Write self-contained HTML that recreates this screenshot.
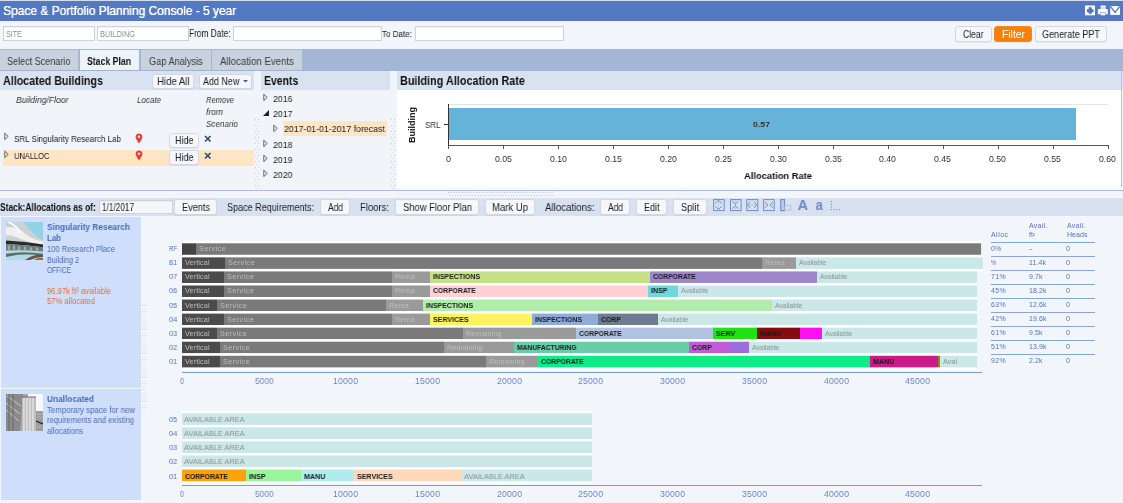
<!DOCTYPE html>
<html><head><meta charset="utf-8"><title>Space &amp; Portfolio Planning Console</title>
<style>
html,body{margin:0;padding:0}
body{width:1123px;height:503px;overflow:hidden;position:relative;background:#eef3f8;font-family:"Liberation Sans",sans-serif}
.t{position:absolute;white-space:nowrap;line-height:normal;font-family:"Liberation Sans",sans-serif;will-change:transform}
.btn{position:absolute;border:1px solid #d3d9e3;border-radius:3px;box-shadow:0 1px 1px rgba(0,0,0,0.06)}
.inp{position:absolute;border:1px solid #cdd2dc;box-shadow:inset 0 1px 1px rgba(0,0,0,0.05)}
</style></head><body>
<div style="position:absolute;left:0px;top:0px;width:1123px;height:1px;background:#d4deec;"></div>
<div style="position:absolute;left:0px;top:1px;width:1123px;height:20px;background:#5479c1;"></div>
<div class="t" style="left:3.00px;top:3.49px;font-size:12.94px;font-weight:normal;font-style:normal;color:#fff;transform:scaleX(0.9231);transform-origin:0 0;text-shadow:0.45px 0 0 #fff;">Space &amp; Portfolio Planning Console - 5 year</div>
<svg style="position:absolute;left:1084px;top:4px" width="39" height="13" viewBox="0 0 39 13">
<rect x="1" y="1.5" width="10" height="9.8" fill="#fff"/>
<rect x="3" y="5.2" width="6.6" height="3" fill="#4f74bf"/>
<rect x="4.6" y="3.2" width="3.2" height="6.6" fill="#4f74bf"/>
<rect x="16.6" y="1.5" width="5" height="4.5" fill="#fff"/>
<path d="M17.2 3.2h3.8M17.2 4.8h3.8" stroke="#a9bde2" stroke-width="0.7"/>
<rect x="13.9" y="5.2" width="9.9" height="5" fill="#fff"/>
<rect x="15.6" y="8.4" width="6.6" height="1" fill="#7d9ad2"/>
<rect x="16.8" y="9.4" width="4.4" height="1.9" fill="#fff"/>
<rect x="26.2" y="2.1" width="9.8" height="8.8" fill="#fff"/>
<path d="M26.4 2.3L31.1 8.5 35.8 2.3" fill="none" stroke="#5479c1" stroke-width="1.3"/>
</svg>
<div style="position:absolute;left:0px;top:21px;width:1123px;height:28px;background:#f2f6fa;"></div>
<div class="inp" style="left:3px;top:26px;width:90px;height:13px;background:#fff"></div>
<div class="t" style="left:5.50px;top:28.68px;font-size:9.30px;font-weight:normal;font-style:normal;color:#8c8c8c;transform:scaleX(0.7641);transform-origin:0 0;">SITE</div>
<div class="inp" style="left:97px;top:26px;width:90px;height:13px;background:#fff"></div>
<div class="t" style="left:99.50px;top:28.68px;font-size:9.30px;font-weight:normal;font-style:normal;color:#8c8c8c;transform:scaleX(0.7966);transform-origin:0 0;">BUILDING</div>
<div class="t" style="left:188.50px;top:28.39px;font-size:10.17px;font-weight:normal;font-style:normal;color:#222;transform:scaleX(0.8195);transform-origin:0 0;">From Date:</div>
<div class="inp" style="left:233px;top:26px;width:147px;height:13px;background:#fff"></div>
<div class="t" style="left:382.40px;top:28.06px;font-size:9.88px;font-weight:normal;font-style:normal;color:#222;transform:scaleX(0.8123);transform-origin:0 0;">To Date:</div>
<div class="inp" style="left:415px;top:26px;width:147px;height:13px;background:#fff"></div>
<div class="btn" style="left:955px;top:26px;width:35px;height:14px;background:#f5f7fb;border-color:#d3d9e3;"></div>
<div class="t" style="left:963.25px;top:29.19px;font-size:10.17px;font-weight:normal;font-style:normal;color:#222;transform:scaleX(0.8431);transform-origin:0 0;">Clear</div>
<div class="btn" style="left:994px;top:26px;width:36px;height:14px;background:#f5800a;border-color:#f08a24;"></div>
<div class="t" style="left:1001.50px;top:29.19px;font-size:10.17px;font-weight:normal;font-style:normal;color:#fff;transform:scaleX(1.0172);transform-origin:0 0;">Filter</div>
<div class="btn" style="left:1035px;top:26px;width:70px;height:14px;background:#f5f7fb;border-color:#d3d9e3;"></div>
<div class="t" style="left:1042.00px;top:29.19px;font-size:10.17px;font-weight:normal;font-style:normal;color:#222;transform:scaleX(0.8918);transform-origin:0 0;">Generate PPT</div>
<div style="position:absolute;left:0px;top:49px;width:1123px;height:22px;background:#a3b6d6;"></div>
<div style="position:absolute;left:0px;top:50px;width:78px;height:20px;background:#c8d1de;"></div>
<div class="t" style="left:6.70px;top:54.60px;font-size:10.61px;font-weight:normal;font-style:normal;color:#3a3a3a;transform:scaleX(0.8531);transform-origin:0 0;">Select Scenario</div>
<div style="position:absolute;left:80px;top:50px;width:59px;height:20px;background:#eef3f9;"></div>
<div class="t" style="left:86.80px;top:54.60px;font-size:10.61px;font-weight:bold;font-style:normal;color:#111;transform:scaleX(0.8198);transform-origin:0 0;">Stack Plan</div>
<div style="position:absolute;left:141px;top:50px;width:70px;height:20px;background:#c8d1de;"></div>
<div class="t" style="left:148.80px;top:54.60px;font-size:10.61px;font-weight:normal;font-style:normal;color:#3a3a3a;transform:scaleX(0.8655);transform-origin:0 0;">Gap Analysis</div>
<div style="position:absolute;left:212px;top:50px;width:90px;height:20px;background:#c8d1de;"></div>
<div class="t" style="left:220.20px;top:54.60px;font-size:10.61px;font-weight:normal;font-style:normal;color:#3a3a3a;transform:scaleX(0.9079);transform-origin:0 0;">Allocation Events</div>
<div style="position:absolute;left:0px;top:70px;width:1123px;height:1px;background:#9fb3d3;"></div>
<div style="position:absolute;left:0px;top:71px;width:1123px;height:120px;background:#f1f5f9;"></div>
<div style="position:absolute;left:0px;top:71px;width:254px;height:19px;background:#d8e2f0;"></div>
<div class="t" style="left:3.00px;top:73.56px;font-size:12.65px;font-weight:bold;font-style:normal;color:#111;transform:scaleX(0.8472);transform-origin:0 0;">Allocated Buildings</div>
<div class="btn" style="left:152px;top:74px;width:40px;height:13px;background:#f5f7fb;border-color:#d3d9e3;"></div>
<div class="t" style="left:156.70px;top:75.53px;font-size:10.47px;font-weight:normal;font-style:normal;color:#222;transform:scaleX(0.9187);transform-origin:0 0;">Hide All</div>
<div class="btn" style="left:199px;top:74px;width:51px;height:13px;background:#f5f7fb;border-color:#d3d9e3;"></div>
<div class="t" style="left:203.40px;top:75.53px;font-size:10.47px;font-weight:normal;font-style:normal;color:#222;transform:scaleX(0.8548);transform-origin:0 0;">Add New</div>
<svg style="position:absolute;left:243px;top:80px" width="6" height="4"><path d="M0 0h5l-2.5 2.5z" fill="#3a5ea8"/></svg>
<div class="t" style="left:15.80px;top:95.34px;font-size:9.01px;font-weight:normal;font-style:italic;color:#333;transform:scaleX(0.9528);transform-origin:0 0;">Building/Floor</div>
<div class="t" style="left:137.00px;top:95.34px;font-size:9.01px;font-weight:normal;font-style:italic;color:#333;transform:scaleX(0.8870);transform-origin:0 0;">Locate</div>
<div class="t" style="left:205.50px;top:95.34px;font-size:9.01px;font-weight:normal;font-style:italic;color:#333;transform:scaleX(0.8344);transform-origin:0 0;">Remove</div>
<div class="t" style="left:205.50px;top:107.34px;font-size:9.01px;font-weight:normal;font-style:italic;color:#333;transform:scaleX(0.9432);transform-origin:0 0;">from</div>
<div class="t" style="left:205.50px;top:119.34px;font-size:9.01px;font-weight:normal;font-style:italic;color:#333;transform:scaleX(0.8997);transform-origin:0 0;">Scenario</div>
<div style="position:absolute;left:3px;top:150px;width:251px;height:16px;background:#fde5c6;"></div>
<svg style="position:absolute;left:4px;top:132px" width="8" height="9"><path d="M0.8 1.2l3.4 3.2-3.4 3.2z" fill="none" stroke="#555" stroke-width="0.9"/></svg>
<div class="t" style="left:14.00px;top:133.06px;font-size:9.88px;font-weight:normal;font-style:normal;color:#222;transform:scaleX(0.8104);transform-origin:0 0;">SRL Singularity Research Lab</div>
<svg style="position:absolute;left:4px;top:150px" width="8" height="9"><path d="M0.8 1.2l3.4 3.2-3.4 3.2z" fill="none" stroke="#555" stroke-width="0.9"/></svg>
<div class="t" style="left:14.00px;top:150.36px;font-size:9.88px;font-weight:normal;font-style:normal;color:#222;transform:scaleX(0.7604);transform-origin:0 0;">UNALLOC</div>
<svg style="position:absolute;left:135px;top:133px" width="8" height="11" viewBox="0 0 8 11"><path d="M4 0.5C2 0.5 0.6 2 0.6 3.8 0.6 6 4 10.5 4 10.5S7.4 6 7.4 3.8C7.4 2 6 .5 4 .5z" fill="#e0423a"/><circle cx="4" cy="3.7" r="1.3" fill="#f6d5d0"/></svg>
<svg style="position:absolute;left:135px;top:150px" width="8" height="11" viewBox="0 0 8 11"><path d="M4 0.5C2 0.5 0.6 2 0.6 3.8 0.6 6 4 10.5 4 10.5S7.4 6 7.4 3.8C7.4 2 6 .5 4 .5z" fill="#e0423a"/><circle cx="4" cy="3.7" r="1.3" fill="#f6d5d0"/></svg>
<div class="btn" style="left:169px;top:133px;width:28px;height:13px;background:#f5f7fb;border-color:#d3d9e3;"></div>
<div class="t" style="left:174.75px;top:135.13px;font-size:10.47px;font-weight:normal;font-style:normal;color:#222;transform:scaleX(0.8595);transform-origin:0 0;">Hide</div>
<div class="btn" style="left:169px;top:150px;width:28px;height:13px;background:#f5f7fb;border-color:#d3d9e3;"></div>
<div class="t" style="left:174.75px;top:151.93px;font-size:10.47px;font-weight:normal;font-style:normal;color:#222;transform:scaleX(0.8595);transform-origin:0 0;">Hide</div>
<svg style="position:absolute;left:204px;top:135px" width="8" height="8"><path d="M1 1l5.5 5.5M6.5 1L1 6.5" stroke="#34506e" stroke-width="1.7"/></svg>
<svg style="position:absolute;left:204px;top:152px" width="8" height="8"><path d="M1 1l5.5 5.5M6.5 1L1 6.5" stroke="#34506e" stroke-width="1.7"/></svg>
<svg style="position:absolute;left:255px;top:119px" width="5" height="71"><defs><pattern id="dp255119" width="5" height="6" patternUnits="userSpaceOnUse"><rect x="0" y="0" width="1" height="1" fill="#c3cad4"/><rect x="3" y="0" width="1" height="1" fill="#c3cad4"/><rect x="1.5" y="3" width="1" height="1" fill="#cfd5dd"/></pattern></defs><rect width="5" height="71" fill="url(#dp255119)"/></svg>
<svg style="position:absolute;left:391px;top:119px" width="5" height="71"><defs><pattern id="dp391119" width="5" height="6" patternUnits="userSpaceOnUse"><rect x="0" y="0" width="1" height="1" fill="#c3cad4"/><rect x="3" y="0" width="1" height="1" fill="#c3cad4"/><rect x="1.5" y="3" width="1" height="1" fill="#cfd5dd"/></pattern></defs><rect width="5" height="71" fill="url(#dp391119)"/></svg>
<div style="position:absolute;left:261px;top:71px;width:129px;height:19px;background:#d8e2f0;"></div>
<div class="t" style="left:263.90px;top:73.56px;font-size:12.65px;font-weight:bold;font-style:normal;color:#111;transform:scaleX(0.8247);transform-origin:0 0;">Events</div>
<svg style="position:absolute;left:263px;top:92.6px" width="8" height="9"><path d="M0.8 1.2l3.4 3.2-3.4 3.2z" fill="none" stroke="#555" stroke-width="0.9"/></svg>
<div class="t" style="left:272.60px;top:92.92px;font-size:9.59px;font-weight:normal;font-style:normal;color:#222;transform:scaleX(0.9137);transform-origin:0 0;">2016</div>
<svg style="position:absolute;left:263px;top:108.7px" width="8" height="8"><path d="M6 1v6h-6z" fill="#222"/></svg>
<div class="t" style="left:272.60px;top:108.02px;font-size:9.59px;font-weight:normal;font-style:normal;color:#222;transform:scaleX(0.9137);transform-origin:0 0;">2017</div>
<svg style="position:absolute;left:263px;top:138.5px" width="8" height="9"><path d="M0.8 1.2l3.4 3.2-3.4 3.2z" fill="none" stroke="#555" stroke-width="0.9"/></svg>
<div class="t" style="left:272.60px;top:138.82px;font-size:9.59px;font-weight:normal;font-style:normal;color:#222;transform:scaleX(0.9137);transform-origin:0 0;">2018</div>
<svg style="position:absolute;left:263px;top:153.6px" width="8" height="9"><path d="M0.8 1.2l3.4 3.2-3.4 3.2z" fill="none" stroke="#555" stroke-width="0.9"/></svg>
<div class="t" style="left:272.60px;top:153.92px;font-size:9.59px;font-weight:normal;font-style:normal;color:#222;transform:scaleX(0.9137);transform-origin:0 0;">2019</div>
<svg style="position:absolute;left:263px;top:169px" width="8" height="9"><path d="M0.8 1.2l3.4 3.2-3.4 3.2z" fill="none" stroke="#555" stroke-width="0.9"/></svg>
<div class="t" style="left:272.60px;top:169.32px;font-size:9.59px;font-weight:normal;font-style:normal;color:#222;transform:scaleX(0.9137);transform-origin:0 0;">2020</div>
<div style="position:absolute;left:283px;top:121px;width:104px;height:15px;background:#fde5c6;"></div>
<svg style="position:absolute;left:273px;top:124px" width="8" height="9"><path d="M0.8 1.2l3.4 3.2-3.4 3.2z" fill="none" stroke="#555" stroke-width="0.9"/></svg>
<div class="t" style="left:283.80px;top:123.32px;font-size:9.59px;font-weight:normal;font-style:normal;color:#222;transform:scaleX(0.9149);transform-origin:0 0;">2017-01-01-2017 forecast</div>
<div style="position:absolute;left:397px;top:71px;width:726px;height:19px;background:#d8e2f0;"></div>
<div class="t" style="left:400.00px;top:73.56px;font-size:12.65px;font-weight:bold;font-style:normal;color:#111;transform:scaleX(0.8582);transform-origin:0 0;">Building Allocation Rate</div>
<div style="position:absolute;left:397px;top:90px;width:725px;height:97px;background:#ffffff;"></div>
<div style="position:absolute;left:1121px;top:71px;width:1px;height:118px;background:#b4c7e4;"></div>
<div style="position:absolute;left:397px;top:187px;width:726px;height:2px;background:#f6f8fb;"></div>
<div style="position:absolute;left:448px;top:104px;width:660px;height:1px;background:#e4e4e4;"></div>
<div style="position:absolute;left:448px;top:104px;width:1px;height:41px;background:#333;"></div>
<div style="position:absolute;left:449px;top:108px;width:627px;height:32px;background:#66b3da;"></div>
<div style="position:absolute;left:448px;top:145px;width:660px;height:1px;background:#555;"></div>
<div style="position:absolute;left:448px;top:145px;width:1px;height:4px;background:#555;"></div>
<div class="t" style="left:446.00px;top:154.11px;font-size:8.72px;font-weight:normal;font-style:normal;color:#333;transform:scaleX(1.0309);transform-origin:0 0;">0</div>
<div style="position:absolute;left:503px;top:145px;width:1px;height:4px;background:#555;"></div>
<div class="t" style="left:494.93px;top:154.11px;font-size:8.72px;font-weight:normal;font-style:normal;color:#333;">0.05</div>
<div style="position:absolute;left:558px;top:145px;width:1px;height:4px;background:#555;"></div>
<div class="t" style="left:549.86px;top:154.11px;font-size:8.72px;font-weight:normal;font-style:normal;color:#333;">0.10</div>
<div style="position:absolute;left:613px;top:145px;width:1px;height:4px;background:#555;"></div>
<div class="t" style="left:604.79px;top:154.11px;font-size:8.72px;font-weight:normal;font-style:normal;color:#333;">0.15</div>
<div style="position:absolute;left:668px;top:145px;width:1px;height:4px;background:#555;"></div>
<div class="t" style="left:659.72px;top:154.11px;font-size:8.72px;font-weight:normal;font-style:normal;color:#333;">0.20</div>
<div style="position:absolute;left:723px;top:145px;width:1px;height:4px;background:#555;"></div>
<div class="t" style="left:714.65px;top:154.11px;font-size:8.72px;font-weight:normal;font-style:normal;color:#333;">0.25</div>
<div style="position:absolute;left:778px;top:145px;width:1px;height:4px;background:#555;"></div>
<div class="t" style="left:769.58px;top:154.11px;font-size:8.72px;font-weight:normal;font-style:normal;color:#333;">0.30</div>
<div style="position:absolute;left:833px;top:145px;width:1px;height:4px;background:#555;"></div>
<div class="t" style="left:824.51px;top:154.11px;font-size:8.72px;font-weight:normal;font-style:normal;color:#333;">0.35</div>
<div style="position:absolute;left:888px;top:145px;width:1px;height:4px;background:#555;"></div>
<div class="t" style="left:879.44px;top:154.11px;font-size:8.72px;font-weight:normal;font-style:normal;color:#333;">0.40</div>
<div style="position:absolute;left:943px;top:145px;width:1px;height:4px;background:#555;"></div>
<div class="t" style="left:934.37px;top:154.11px;font-size:8.72px;font-weight:normal;font-style:normal;color:#333;">0.45</div>
<div style="position:absolute;left:998px;top:145px;width:1px;height:4px;background:#555;"></div>
<div class="t" style="left:989.30px;top:154.11px;font-size:8.72px;font-weight:normal;font-style:normal;color:#333;">0.50</div>
<div style="position:absolute;left:1053px;top:145px;width:1px;height:4px;background:#555;"></div>
<div class="t" style="left:1044.23px;top:154.11px;font-size:8.72px;font-weight:normal;font-style:normal;color:#333;">0.55</div>
<div style="position:absolute;left:1108px;top:145px;width:1px;height:4px;background:#555;"></div>
<div class="t" style="left:1099.16px;top:154.11px;font-size:8.72px;font-weight:normal;font-style:normal;color:#333;">0.60</div>
<div style="position:absolute;left:444px;top:124px;width:4px;height:1px;background:#333;"></div>
<div class="t" style="left:424.50px;top:119.61px;font-size:8.72px;font-weight:normal;font-style:normal;color:#333;transform:scaleX(0.9136);transform-origin:0 0;">SRL</div>
<div class="t" style="left:407px;top:143px;font-size:9px;font-weight:bold;color:#111;transform:rotate(-90deg);transform-origin:0 0">Building</div>
<div class="t" style="left:752.50px;top:119.97px;font-size:7.99px;font-weight:bold;font-style:normal;color:#333;transform:scaleX(1.0926);transform-origin:0 0;">0.57</div>
<div class="t" style="left:744.00px;top:170.39px;font-size:9.74px;font-weight:bold;font-style:normal;color:#111;transform:scaleX(0.9593);transform-origin:0 0;">Allocation Rate</div>
<div style="position:absolute;left:0px;top:191px;width:1123px;height:7px;background:#f2f6fa;"></div>
<div style="position:absolute;left:0px;top:190px;width:1123px;height:1px;background:#a8bfe0;"></div>
<div style="position:absolute;left:0px;top:198px;width:1123px;height:18px;background:#d8e1ef;"></div>
<div class="t" style="left:0.00px;top:201.59px;font-size:10.17px;font-weight:bold;font-style:normal;color:#111;transform:scaleX(0.8323);transform-origin:0 0;">Stack:Allocations as of:</div>
<div class="inp" style="left:99px;top:200px;width:72px;height:12px;background:#f4f6f9"></div>
<div class="t" style="left:102.00px;top:201.53px;font-size:10.47px;font-weight:normal;font-style:normal;color:#222;transform:scaleX(0.7855);transform-origin:0 0;">1/1/2017</div>
<div class="btn" style="left:174px;top:199px;width:41px;height:14px;background:#f5f7fb;border-color:#d3d9e3;"></div>
<div class="t" style="left:181.50px;top:201.53px;font-size:10.47px;font-weight:normal;font-style:normal;color:#222;transform:scaleX(0.8752);transform-origin:0 0;">Events</div>
<div class="t" style="left:227.00px;top:201.53px;font-size:10.47px;font-weight:normal;font-style:normal;color:#222;transform:scaleX(0.8645);transform-origin:0 0;">Space Requirements:</div>
<div class="btn" style="left:320px;top:199px;width:28px;height:14px;background:#f5f7fb;border-color:#d3d9e3;"></div>
<div class="t" style="left:327.50px;top:201.53px;font-size:10.47px;font-weight:normal;font-style:normal;color:#222;transform:scaleX(0.8055);transform-origin:0 0;">Add</div>
<div class="t" style="left:359.50px;top:201.53px;font-size:10.47px;font-weight:normal;font-style:normal;color:#222;transform:scaleX(0.9067);transform-origin:0 0;">Floors:</div>
<div class="btn" style="left:395px;top:199px;width:82px;height:14px;background:#f5f7fb;border-color:#d3d9e3;"></div>
<div class="t" style="left:402.50px;top:201.53px;font-size:10.47px;font-weight:normal;font-style:normal;color:#222;transform:scaleX(0.8986);transform-origin:0 0;">Show Floor Plan</div>
<div class="btn" style="left:485px;top:199px;width:48px;height:14px;background:#f5f7fb;border-color:#d3d9e3;"></div>
<div class="t" style="left:492.00px;top:201.53px;font-size:10.47px;font-weight:normal;font-style:normal;color:#222;transform:scaleX(0.9104);transform-origin:0 0;">Mark Up</div>
<div class="t" style="left:544.70px;top:201.53px;font-size:10.47px;font-weight:normal;font-style:normal;color:#222;transform:scaleX(0.9249);transform-origin:0 0;">Allocations:</div>
<div class="btn" style="left:600px;top:199px;width:28px;height:14px;background:#f5f7fb;border-color:#d3d9e3;"></div>
<div class="t" style="left:607.50px;top:201.53px;font-size:10.47px;font-weight:normal;font-style:normal;color:#222;transform:scaleX(0.8055);transform-origin:0 0;">Add</div>
<div class="btn" style="left:636px;top:199px;width:29px;height:14px;background:#f5f7fb;border-color:#d3d9e3;"></div>
<div class="t" style="left:643.75px;top:201.53px;font-size:10.47px;font-weight:normal;font-style:normal;color:#222;transform:scaleX(0.8595);transform-origin:0 0;">Edit</div>
<div class="btn" style="left:673px;top:199px;width:32px;height:14px;background:#f5f7fb;border-color:#d3d9e3;"></div>
<div class="t" style="left:681.00px;top:201.53px;font-size:10.47px;font-weight:normal;font-style:normal;color:#222;transform:scaleX(0.8841);transform-origin:0 0;">Split</div>
<svg style="position:absolute;left:712px;top:199px" width="130" height="13" viewBox="0 0 130 13">
<g fill="none" stroke="#6e8fc9" stroke-width="1">
<path d="M6.5 1.5v9" stroke="#c4ccd8"/>
<path d="M23.4 1.5v9" stroke="#c4ccd8"/>
<path d="M36.5 6h7" stroke="#c4ccd8" stroke-width="1.6"/>
<path d="M52 6h2M60 6h2" stroke="#c4ccd8" stroke-width="1.2"/>
<rect x="1.6" y="0.6" width="10.6" height="11"/>
<path d="M3.3 4.4L6.5 1.2l3.3 3.2M3.3 7.3L6.5 10.5l3.3-3.2"/>
<rect x="18.5" y="0.6" width="10.6" height="11"/>
<path d="M20.3 2.1L23.4 5l3.1-2.9M20.3 9.7L23.4 6.8l3.1 2.9"/>
<rect x="34.8" y="0.6" width="11" height="11"/>
<path d="M38.5 2.6L35.4 5.9 38.5 9.2M41.9 2.6L45 5.9 41.9 9.2"/>
<rect x="51.6" y="0.6" width="10.6" height="11"/>
<path d="M53.1 3L56 5.9 53.1 8.8M60.9 3L58.2 5.9 60.9 8.8"/>
<rect x="68.8" y="0.6" width="3.6" height="11" stroke-width="1.3"/>
<path d="M70.6 1.5v9" stroke="#a9bbd9" stroke-width="0.8"/>
<rect x="72.9" y="6.5" width="6" height="4.7" stroke="#b9c5d8"/>
</g>
<text x="85.4" y="10.9" font-family="Liberation Sans" font-weight="bold" font-size="14.5" fill="#6e8fc9">A</text>
<text x="0" y="0" font-family="Liberation Sans" font-weight="bold" font-size="15.5" fill="#6e8fc9" transform="translate(103.4 11) scale(0.84 1)">a</text>
<g fill="#6e8fc9"><rect x="118.8" y="2" width="1.1" height="1.1"/><rect x="118.8" y="4.8" width="1.1" height="1.1"/><rect x="118.8" y="7.5" width="1.1" height="1.1"/><rect x="118.8" y="10" width="1.1" height="1.1"/>
<rect x="121.5" y="10" width="1.1" height="1.1"/><rect x="124.2" y="10" width="1.1" height="1.1"/><rect x="126.9" y="10" width="1.1" height="1.1"/></g>
</svg>
<svg style="position:absolute;left:448px;top:191px" width="106" height="6"><defs><pattern id="hdp" width="5.6" height="6" patternUnits="userSpaceOnUse"><rect x="0" y="1" width="1" height="1" fill="#b3bcc9"/><rect x="2.8" y="1" width="1" height="1" fill="#b3bcc9"/><rect x="1.4" y="4" width="1" height="1" fill="#b8c0cc"/><rect x="4.2" y="4" width="1" height="1" fill="#b8c0cc"/></pattern></defs><rect width="106" height="6" fill="url(#hdp)"/></svg>
<div style="position:absolute;left:0px;top:216px;width:1123px;height:287px;background:#f2f6fa;"></div>
<div style="position:absolute;left:1px;top:217px;width:140px;height:171px;background:#cfdffb;"></div>
<div style="position:absolute;left:1px;top:389px;width:140px;height:111px;background:#cfdffb;"></div>
<svg style="position:absolute;left:142px;top:305px" width="5" height="106"><defs><pattern id="dp142305" width="5" height="6" patternUnits="userSpaceOnUse"><rect x="0" y="0" width="1" height="1" fill="#c3cad4"/><rect x="3" y="0" width="1" height="1" fill="#c3cad4"/><rect x="1.5" y="3" width="1" height="1" fill="#cfd5dd"/></pattern></defs><rect width="5" height="106" fill="url(#dp142305)"/></svg>
<svg style="position:absolute;left:6px;top:222px" width="37" height="38" viewBox="0 0 37 37" preserveAspectRatio="none">
<rect width="37" height="37" fill="#c9d3d6"/>
<path d="M0 0H19Q22 10 37 17V0z" fill="#cfd2d3"/>
<path d="M18 0H37V18Q27 13 18 0z" fill="#92d2e6"/>
<path d="M0 5Q12 4 20 12Q28 18 37 19V22Q26 21 16 17Q6 13 0 13z" fill="#f0f0ee"/>
<path d="M2 0Q10 3 14 10" stroke="#ffffff" stroke-width="1.5" fill="none"/>
<path d="M0 18Q20 19 37 22V24.5Q20 22.5 0 21.5z" fill="#2a2a2a"/>
<path d="M0 21.5Q20 22.5 37 24.5V29Q20 27 0 28z" fill="#6b7f7d"/>
<path d="M3 23v4M8 23v4M13 23.5v4M19 24v3.5M25 24.5v3M31 25v3" stroke="#c9d8d4" stroke-width="1"/>
<path d="M0 28Q20 27 37 29V37H0z" fill="#b3dbe6"/>
<path d="M0 31Q18 28 37 31V33Q18 30 0 34z" fill="#5c6e70"/>
<path d="M19 37Q27 31 37 32V34Q30 34 24 37z" fill="#6a5540"/>
<path d="M28 37Q32 34 37 35V37z" fill="#8a7056"/>
</svg>
<div class="t" style="left:47.00px;top:222.38px;font-size:9.30px;font-weight:bold;font-style:normal;color:#4a6db5;transform:scaleX(0.8969);transform-origin:0 0;">Singularity Research</div>
<div class="t" style="left:47.00px;top:232.58px;font-size:9.30px;font-weight:bold;font-style:normal;color:#4a6db5;transform:scaleX(0.8465);transform-origin:0 0;">Lab</div>
<div class="t" style="left:47.00px;top:243.81px;font-size:8.72px;font-weight:normal;font-style:normal;color:#4a6db5;transform:scaleX(0.8658);transform-origin:0 0;">100 Research Place</div>
<div class="t" style="left:47.00px;top:254.61px;font-size:8.72px;font-weight:normal;font-style:normal;color:#4a6db5;transform:scaleX(0.8354);transform-origin:0 0;">Building 2</div>
<div class="t" style="left:47.00px;top:264.91px;font-size:8.72px;font-weight:normal;font-style:normal;color:#4a6db5;transform:scaleX(0.7506);transform-origin:0 0;">OFFICE</div>
<div class="t" style="left:47.00px;top:285.91px;font-size:8.72px;font-weight:normal;font-style:normal;color:#e4703a;transform:scaleX(0.8743);transform-origin:0 0;">96.97k ft² available</div>
<div class="t" style="left:47.00px;top:296.41px;font-size:8.72px;font-weight:normal;font-style:normal;color:#e4703a;transform:scaleX(0.8761);transform-origin:0 0;">57% allocated</div>
<svg style="position:absolute;left:6px;top:394px" width="37" height="37" viewBox="0 0 37 37">
<rect width="37" height="37" fill="#a8a8a8"/>
<path d="M22 0H37V17H30V7H22z" fill="#f8f8f8"/>
<path d="M0 0H17L14 37H0z" fill="#8a8a8a"/>
<path d="M1 2L15 12M0 9L14 20M0 16L13 27" stroke="#cfcfcf" stroke-width="0.9"/>
<path d="M3 0V37M7 0V37" stroke="#5e5e5e" stroke-width="0.8"/>
<path d="M16 3H30V37H16z" fill="#bdbdbd"/>
<path d="M18 4V37M21 3V37M24 3V37M27 4V37" stroke="#f4f4f4" stroke-width="1"/>
<path d="M16 3H30" stroke="#555" stroke-width="0.8"/>
<path d="M30 17H37V37H30z" fill="#9d9d9d"/>
<path d="M31 20H37M31 23H37M31 33H37" stroke="#bdbdbd" stroke-width="0.6"/>
<path d="M30 27L37 30" stroke="#222" stroke-width="1.3"/>
</svg>
<div class="t" style="left:47.00px;top:393.58px;font-size:9.30px;font-weight:bold;font-style:normal;color:#4a6db5;transform:scaleX(0.8914);transform-origin:0 0;">Unallocated</div>
<div class="t" style="left:47.00px;top:404.61px;font-size:8.72px;font-weight:normal;font-style:normal;color:#4a6db5;transform:scaleX(0.8988);transform-origin:0 0;">Temporary space for new</div>
<div class="t" style="left:47.00px;top:415.11px;font-size:8.72px;font-weight:normal;font-style:normal;color:#4a6db5;transform:scaleX(0.8712);transform-origin:0 0;">requirements and existing</div>
<div class="t" style="left:47.00px;top:425.61px;font-size:8.72px;font-weight:normal;font-style:normal;color:#4a6db5;transform:scaleX(0.8736);transform-origin:0 0;">allocations</div>
<div class="t" style="left:169.00px;top:243.50px;font-size:7.85px;font-weight:normal;font-style:normal;color:#5073b8;transform:scaleX(0.7742);transform-origin:0 0;">RF</div>
<div class="t" style="left:169.00px;top:257.50px;font-size:7.85px;font-weight:normal;font-style:normal;color:#5073b8;transform:scaleX(0.8437);transform-origin:0 0;">B1</div>
<div class="t" style="left:168.80px;top:271.50px;font-size:7.85px;font-weight:normal;font-style:normal;color:#5073b8;transform:scaleX(0.9507);transform-origin:0 0;">07</div>
<div class="t" style="left:168.80px;top:285.50px;font-size:7.85px;font-weight:normal;font-style:normal;color:#5073b8;transform:scaleX(0.9507);transform-origin:0 0;">06</div>
<div class="t" style="left:168.80px;top:300.50px;font-size:7.85px;font-weight:normal;font-style:normal;color:#5073b8;transform:scaleX(0.9507);transform-origin:0 0;">05</div>
<div class="t" style="left:168.80px;top:314.50px;font-size:7.85px;font-weight:normal;font-style:normal;color:#5073b8;transform:scaleX(0.9507);transform-origin:0 0;">04</div>
<div class="t" style="left:168.80px;top:328.50px;font-size:7.85px;font-weight:normal;font-style:normal;color:#5073b8;transform:scaleX(0.9507);transform-origin:0 0;">03</div>
<div class="t" style="left:168.80px;top:342.50px;font-size:7.85px;font-weight:normal;font-style:normal;color:#5073b8;transform:scaleX(0.9507);transform-origin:0 0;">02</div>
<div class="t" style="left:168.80px;top:356.50px;font-size:7.85px;font-weight:normal;font-style:normal;color:#5073b8;transform:scaleX(0.9507);transform-origin:0 0;">01</div>
<svg style="position:absolute;left:0;top:0" width="1123" height="503"><rect x="182" y="240.80" width="801" height="16.6" fill="#fff"/><rect x="182" y="243.30" width="14" height="11.6" fill="#444"/><rect x="196" y="243.30" width="785" height="11.6" fill="#7a7a7a"/><rect x="981" y="243.30" width="2" height="11.6" fill="#e6f3f3"/><rect x="182" y="254.86" width="801" height="16.6" fill="#fff"/><rect x="182" y="257.36" width="43" height="11.6" fill="#4b4b4b"/><rect x="225" y="257.36" width="537" height="11.6" fill="#7a7a7a"/><rect x="762" y="257.36" width="34" height="11.6" fill="#9a9a9a"/><rect x="796" y="257.36" width="187" height="11.6" fill="#cbe8e9"/><rect x="182" y="268.92" width="795" height="16.6" fill="#fff"/><rect x="182" y="271.42" width="42" height="11.6" fill="#4b4b4b"/><rect x="224" y="271.42" width="168" height="11.6" fill="#7a7a7a"/><rect x="392" y="271.42" width="38" height="11.6" fill="#9a9a9a"/><rect x="430" y="271.42" width="220" height="11.6" fill="#c6e08a"/><rect x="650" y="271.42" width="167" height="11.6" fill="#9d86c9"/><rect x="817" y="271.42" width="160" height="11.6" fill="#cbe8e9"/><rect x="182" y="282.98" width="795" height="16.6" fill="#fff"/><rect x="182" y="285.48" width="42" height="11.6" fill="#4b4b4b"/><rect x="224" y="285.48" width="168" height="11.6" fill="#7a7a7a"/><rect x="392" y="285.48" width="38" height="11.6" fill="#9a9a9a"/><rect x="430" y="285.48" width="218" height="11.6" fill="#ffd0d4"/><rect x="648" y="285.48" width="30" height="11.6" fill="#6ed8da"/><rect x="678" y="285.48" width="299" height="11.6" fill="#cbe8e9"/><rect x="182" y="297.04" width="795" height="16.6" fill="#fff"/><rect x="182" y="299.54" width="35" height="11.6" fill="#4b4b4b"/><rect x="217" y="299.54" width="169" height="11.6" fill="#7a7a7a"/><rect x="386" y="299.54" width="37" height="11.6" fill="#9a9a9a"/><rect x="423" y="299.54" width="349" height="11.6" fill="#b2ecaa"/><rect x="772" y="299.54" width="205" height="11.6" fill="#cbe8e9"/><rect x="182" y="311.10" width="795" height="16.6" fill="#fff"/><rect x="182" y="313.60" width="42" height="11.6" fill="#4b4b4b"/><rect x="224" y="313.60" width="168" height="11.6" fill="#7a7a7a"/><rect x="392" y="313.60" width="38" height="11.6" fill="#9a9a9a"/><rect x="430" y="313.60" width="102" height="11.6" fill="#fef35a"/><rect x="532" y="313.60" width="66" height="11.6" fill="#8eacd9"/><rect x="598" y="313.60" width="60" height="11.6" fill="#6c7d91"/><rect x="658" y="313.60" width="319" height="11.6" fill="#cbe8e9"/><rect x="182" y="325.16" width="795" height="16.6" fill="#fff"/><rect x="182" y="327.66" width="35" height="11.6" fill="#4b4b4b"/><rect x="217" y="327.66" width="246" height="11.6" fill="#7a7a7a"/><rect x="463" y="327.66" width="113" height="11.6" fill="#9a9a9a"/><rect x="576" y="327.66" width="137" height="11.6" fill="#b0c4e2"/><rect x="713" y="327.66" width="44" height="11.6" fill="#1fe312"/><rect x="757" y="327.66" width="43" height="11.6" fill="#840e0e"/><rect x="800" y="327.66" width="22" height="11.6" fill="#ff10f0"/><rect x="822" y="327.66" width="155" height="11.6" fill="#cbe8e9"/><rect x="182" y="339.22" width="795" height="16.6" fill="#fff"/><rect x="182" y="341.72" width="38" height="11.6" fill="#4b4b4b"/><rect x="220" y="341.72" width="224" height="11.6" fill="#7a7a7a"/><rect x="444" y="341.72" width="70" height="11.6" fill="#9a9a9a"/><rect x="514" y="341.72" width="175" height="11.6" fill="#6acca8"/><rect x="689" y="341.72" width="41" height="11.6" fill="#c05cd6"/><rect x="730" y="341.72" width="19" height="11.6" fill="#9b6fdb"/><rect x="749" y="341.72" width="228" height="11.6" fill="#cbe8e9"/><rect x="182" y="353.28" width="795" height="16.6" fill="#fff"/><rect x="182" y="355.78" width="38" height="11.6" fill="#4b4b4b"/><rect x="220" y="355.78" width="266" height="11.6" fill="#7a7a7a"/><rect x="486" y="355.78" width="52" height="11.6" fill="#9a9a9a"/><rect x="538" y="355.78" width="332" height="11.6" fill="#10eb8a"/><rect x="870" y="355.78" width="68" height="11.6" fill="#cc1a8a"/><rect x="938" y="355.78" width="2" height="11.6" fill="#8f8a10"/><rect x="940" y="355.78" width="37" height="11.6" fill="#cbe8e9"/></svg>
<div class="t" style="left:198.60px;top:243.92px;font-size:7.27px;font-weight:normal;font-style:normal;color:#bdbdbd;letter-spacing:0.411px;">Service</div>
<div class="t" style="left:184.60px;top:257.92px;font-size:7.27px;font-weight:normal;font-style:normal;color:#bdbdbd;letter-spacing:0.110px;">Vertical</div>
<div class="t" style="left:227.60px;top:257.92px;font-size:7.27px;font-weight:normal;font-style:normal;color:#bdbdbd;letter-spacing:0.411px;">Service</div>
<div class="t" style="left:764.60px;top:257.92px;font-size:7.27px;font-weight:normal;font-style:normal;color:#bdbdbd;letter-spacing:0.105px;">Rema</div>
<div class="t" style="left:798.60px;top:257.92px;font-size:7.27px;font-weight:normal;font-style:normal;color:#8a8f90;transform:scaleX(0.9332);transform-origin:0 0;">Available</div>
<div class="t" style="left:184.60px;top:271.92px;font-size:7.27px;font-weight:normal;font-style:normal;color:#bdbdbd;letter-spacing:0.110px;">Vertical</div>
<div class="t" style="left:226.60px;top:271.92px;font-size:7.27px;font-weight:normal;font-style:normal;color:#bdbdbd;letter-spacing:0.411px;">Service</div>
<div class="t" style="left:394.60px;top:271.92px;font-size:7.27px;font-weight:normal;font-style:normal;color:#bdbdbd;letter-spacing:0.105px;">Rema</div>
<div class="t" style="left:432.60px;top:271.92px;font-size:7.27px;font-weight:bold;font-style:normal;color:#1a1a1a;transform:scaleX(0.9540);transform-origin:0 0;">INSPECTIONS</div>
<div class="t" style="left:652.60px;top:271.92px;font-size:7.27px;font-weight:bold;font-style:normal;color:#1a1a1a;transform:scaleX(0.9326);transform-origin:0 0;">CORPORATE</div>
<div class="t" style="left:819.60px;top:271.92px;font-size:7.27px;font-weight:normal;font-style:normal;color:#8a8f90;transform:scaleX(0.9332);transform-origin:0 0;">Available</div>
<div class="t" style="left:184.60px;top:285.92px;font-size:7.27px;font-weight:normal;font-style:normal;color:#bdbdbd;letter-spacing:0.110px;">Vertical</div>
<div class="t" style="left:226.60px;top:285.92px;font-size:7.27px;font-weight:normal;font-style:normal;color:#bdbdbd;letter-spacing:0.411px;">Service</div>
<div class="t" style="left:394.60px;top:285.92px;font-size:7.27px;font-weight:normal;font-style:normal;color:#bdbdbd;letter-spacing:0.105px;">Rema</div>
<div class="t" style="left:432.60px;top:285.92px;font-size:7.27px;font-weight:bold;font-style:normal;color:#1a1a1a;transform:scaleX(0.9326);transform-origin:0 0;">CORPORATE</div>
<div class="t" style="left:650.60px;top:285.92px;font-size:7.27px;font-weight:bold;font-style:normal;color:#1a1a1a;transform:scaleX(0.9668);transform-origin:0 0;">INSP</div>
<div class="t" style="left:680.60px;top:285.92px;font-size:7.27px;font-weight:normal;font-style:normal;color:#8a8f90;transform:scaleX(0.9332);transform-origin:0 0;">Available</div>
<div class="t" style="left:184.60px;top:300.92px;font-size:7.27px;font-weight:normal;font-style:normal;color:#bdbdbd;letter-spacing:0.110px;">Vertical</div>
<div class="t" style="left:219.60px;top:300.92px;font-size:7.27px;font-weight:normal;font-style:normal;color:#bdbdbd;letter-spacing:0.411px;">Service</div>
<div class="t" style="left:388.60px;top:300.92px;font-size:7.27px;font-weight:normal;font-style:normal;color:#bdbdbd;letter-spacing:0.105px;">Rema</div>
<div class="t" style="left:425.60px;top:300.92px;font-size:7.27px;font-weight:bold;font-style:normal;color:#1a1a1a;transform:scaleX(0.9540);transform-origin:0 0;">INSPECTIONS</div>
<div class="t" style="left:774.60px;top:300.92px;font-size:7.27px;font-weight:normal;font-style:normal;color:#8a8f90;transform:scaleX(0.9332);transform-origin:0 0;">Available</div>
<div class="t" style="left:184.60px;top:314.92px;font-size:7.27px;font-weight:normal;font-style:normal;color:#bdbdbd;letter-spacing:0.110px;">Vertical</div>
<div class="t" style="left:226.60px;top:314.92px;font-size:7.27px;font-weight:normal;font-style:normal;color:#bdbdbd;letter-spacing:0.411px;">Service</div>
<div class="t" style="left:394.60px;top:314.92px;font-size:7.27px;font-weight:normal;font-style:normal;color:#bdbdbd;letter-spacing:0.105px;">Rema</div>
<div class="t" style="left:432.60px;top:314.92px;font-size:7.27px;font-weight:bold;font-style:normal;color:#1a1a1a;transform:scaleX(0.9748);transform-origin:0 0;">SERVICES</div>
<div class="t" style="left:534.60px;top:314.92px;font-size:7.27px;font-weight:bold;font-style:normal;color:#1a1a1a;transform:scaleX(0.9540);transform-origin:0 0;">INSPECTIONS</div>
<div class="t" style="left:600.60px;top:314.92px;font-size:7.27px;font-weight:bold;font-style:normal;color:#1a1a1a;transform:scaleX(0.9382);transform-origin:0 0;">CORP</div>
<div class="t" style="left:660.60px;top:314.92px;font-size:7.27px;font-weight:normal;font-style:normal;color:#8a8f90;transform:scaleX(0.9332);transform-origin:0 0;">Available</div>
<div class="t" style="left:184.60px;top:328.92px;font-size:7.27px;font-weight:normal;font-style:normal;color:#bdbdbd;letter-spacing:0.110px;">Vertical</div>
<div class="t" style="left:219.60px;top:328.92px;font-size:7.27px;font-weight:normal;font-style:normal;color:#bdbdbd;letter-spacing:0.411px;">Service</div>
<div class="t" style="left:465.60px;top:328.92px;font-size:7.27px;font-weight:normal;font-style:normal;color:#bdbdbd;letter-spacing:0.107px;">Remaining</div>
<div class="t" style="left:578.60px;top:328.92px;font-size:7.27px;font-weight:bold;font-style:normal;color:#1a1a1a;transform:scaleX(0.9326);transform-origin:0 0;">CORPORATE</div>
<div class="t" style="left:715.60px;top:328.92px;font-size:7.27px;font-weight:bold;font-style:normal;color:#1a1a1a;transform:scaleX(0.9766);transform-origin:0 0;">SERV</div>
<div class="t" style="left:759.60px;top:328.92px;font-size:7.27px;font-weight:bold;font-style:normal;color:#1a1a1a;transform:scaleX(0.9771);transform-origin:0 0;">MANU</div>
<div class="t" style="left:824.60px;top:328.92px;font-size:7.27px;font-weight:normal;font-style:normal;color:#8a8f90;transform:scaleX(0.9332);transform-origin:0 0;">Available</div>
<div class="t" style="left:184.60px;top:342.92px;font-size:7.27px;font-weight:normal;font-style:normal;color:#bdbdbd;letter-spacing:0.110px;">Vertical</div>
<div class="t" style="left:222.60px;top:342.92px;font-size:7.27px;font-weight:normal;font-style:normal;color:#bdbdbd;letter-spacing:0.411px;">Service</div>
<div class="t" style="left:446.60px;top:342.92px;font-size:7.27px;font-weight:normal;font-style:normal;color:#bdbdbd;letter-spacing:0.107px;">Remaining</div>
<div class="t" style="left:516.60px;top:342.92px;font-size:7.27px;font-weight:bold;font-style:normal;color:#1a1a1a;transform:scaleX(0.9269);transform-origin:0 0;">MANUFACTURING</div>
<div class="t" style="left:691.60px;top:342.92px;font-size:7.27px;font-weight:bold;font-style:normal;color:#1a1a1a;transform:scaleX(0.9382);transform-origin:0 0;">CORP</div>
<div class="t" style="left:751.60px;top:342.92px;font-size:7.27px;font-weight:normal;font-style:normal;color:#8a8f90;transform:scaleX(0.9332);transform-origin:0 0;">Available</div>
<div class="t" style="left:184.60px;top:356.92px;font-size:7.27px;font-weight:normal;font-style:normal;color:#bdbdbd;letter-spacing:0.110px;">Vertical</div>
<div class="t" style="left:222.60px;top:356.92px;font-size:7.27px;font-weight:normal;font-style:normal;color:#bdbdbd;letter-spacing:0.411px;">Service</div>
<div class="t" style="left:488.60px;top:356.92px;font-size:7.27px;font-weight:normal;font-style:normal;color:#bdbdbd;letter-spacing:0.107px;">Remaining</div>
<div class="t" style="left:540.60px;top:356.92px;font-size:7.27px;font-weight:bold;font-style:normal;color:#1a1a1a;transform:scaleX(0.9326);transform-origin:0 0;">CORPORATE</div>
<div class="t" style="left:872.60px;top:356.92px;font-size:7.27px;font-weight:bold;font-style:normal;color:#1a1a1a;transform:scaleX(0.9771);transform-origin:0 0;">MANU</div>
<div class="t" style="left:942.60px;top:356.92px;font-size:7.27px;font-weight:normal;font-style:normal;color:#8a8f90;letter-spacing:0.131px;">Avai</div>
<div style="position:absolute;left:182px;top:372px;width:800px;height:1px;background:#7f9bd2;"></div>
<div class="t" style="left:180.10px;top:375.81px;font-size:8.72px;font-weight:normal;font-style:normal;color:#6a88c6;transform:scaleX(0.8247);transform-origin:0 0;">0</div>
<div class="t" style="left:254.50px;top:375.81px;font-size:8.72px;font-weight:normal;font-style:normal;color:#6a88c6;transform:scaleX(0.9639);transform-origin:0 0;">5000</div>
<div class="t" style="left:333.10px;top:375.81px;font-size:8.72px;font-weight:normal;font-style:normal;color:#6a88c6;letter-spacing:0.187px;">10000</div>
<div class="t" style="left:414.85px;top:375.81px;font-size:8.72px;font-weight:normal;font-style:normal;color:#6a88c6;letter-spacing:0.187px;">15000</div>
<div class="t" style="left:496.60px;top:375.81px;font-size:8.72px;font-weight:normal;font-style:normal;color:#6a88c6;letter-spacing:0.187px;">20000</div>
<div class="t" style="left:578.35px;top:375.81px;font-size:8.72px;font-weight:normal;font-style:normal;color:#6a88c6;letter-spacing:0.187px;">25000</div>
<div class="t" style="left:660.10px;top:375.81px;font-size:8.72px;font-weight:normal;font-style:normal;color:#6a88c6;letter-spacing:0.187px;">30000</div>
<div class="t" style="left:741.85px;top:375.81px;font-size:8.72px;font-weight:normal;font-style:normal;color:#6a88c6;letter-spacing:0.187px;">35000</div>
<div class="t" style="left:823.60px;top:375.81px;font-size:8.72px;font-weight:normal;font-style:normal;color:#6a88c6;letter-spacing:0.187px;">40000</div>
<div class="t" style="left:905.35px;top:375.81px;font-size:8.72px;font-weight:normal;font-style:normal;color:#6a88c6;letter-spacing:0.187px;">45000</div>
<div class="t" style="left:991.30px;top:231.29px;font-size:6.98px;font-weight:normal;font-style:normal;color:#5273b8;letter-spacing:0.469px;">Alloc</div>
<div class="t" style="left:1028.70px;top:222.49px;font-size:6.98px;font-weight:normal;font-style:normal;color:#5273b8;letter-spacing:0.273px;">Avail.</div>
<div class="t" style="left:1028.70px;top:231.29px;font-size:6.98px;font-weight:normal;font-style:normal;color:#5273b8;transform:scaleX(0.9677);transform-origin:0 0;">ft²</div>
<div class="t" style="left:1066.50px;top:222.49px;font-size:6.98px;font-weight:normal;font-style:normal;color:#5273b8;letter-spacing:0.273px;">Avail.</div>
<div class="t" style="left:1066.50px;top:231.29px;font-size:6.98px;font-weight:normal;font-style:normal;color:#5273b8;letter-spacing:0.058px;">Heads</div>
<div style="position:absolute;left:991px;top:242px;width:104px;height:1px;background:#8ba5d6;"></div>
<div class="t" style="left:991.20px;top:245.49px;font-size:6.98px;font-weight:normal;font-style:normal;color:#5273b8;transform:scaleX(0.9917);transform-origin:0 0;">0%</div>
<div class="t" style="left:1028.70px;top:245.49px;font-size:6.98px;font-weight:normal;font-style:normal;color:#5273b8;transform:scaleX(0.7747);transform-origin:0 0;">--</div>
<div class="t" style="left:1066.20px;top:245.49px;font-size:6.98px;font-weight:normal;font-style:normal;color:#5273b8;transform:scaleX(1.0309);transform-origin:0 0;">0</div>
<div style="position:absolute;left:991px;top:256px;width:104px;height:1px;background:#8ba5d6;"></div>
<div class="t" style="left:991.20px;top:259.49px;font-size:6.98px;font-weight:normal;font-style:normal;color:#5273b8;transform:scaleX(0.8060);transform-origin:0 0;">%</div>
<div class="t" style="left:1028.70px;top:259.49px;font-size:6.98px;font-weight:normal;font-style:normal;color:#5273b8;letter-spacing:0.113px;">11.4k</div>
<div class="t" style="left:1066.20px;top:259.49px;font-size:6.98px;font-weight:normal;font-style:normal;color:#5273b8;transform:scaleX(1.0309);transform-origin:0 0;">0</div>
<div style="position:absolute;left:991px;top:270px;width:104px;height:1px;background:#8ba5d6;"></div>
<div class="t" style="left:991.20px;top:273.49px;font-size:6.98px;font-weight:normal;font-style:normal;color:#5273b8;letter-spacing:0.368px;">71%</div>
<div class="t" style="left:1028.70px;top:273.49px;font-size:6.98px;font-weight:normal;font-style:normal;color:#5273b8;letter-spacing:0.071px;">9.7k</div>
<div class="t" style="left:1066.20px;top:273.49px;font-size:6.98px;font-weight:normal;font-style:normal;color:#5273b8;transform:scaleX(1.0309);transform-origin:0 0;">0</div>
<div style="position:absolute;left:991px;top:284px;width:104px;height:1px;background:#8ba5d6;"></div>
<div class="t" style="left:991.20px;top:287.49px;font-size:6.98px;font-weight:normal;font-style:normal;color:#5273b8;letter-spacing:0.368px;">45%</div>
<div class="t" style="left:1028.70px;top:287.49px;font-size:6.98px;font-weight:normal;font-style:normal;color:#5273b8;letter-spacing:0.083px;">18.2k</div>
<div class="t" style="left:1066.20px;top:287.49px;font-size:6.98px;font-weight:normal;font-style:normal;color:#5273b8;transform:scaleX(1.0309);transform-origin:0 0;">0</div>
<div style="position:absolute;left:991px;top:298px;width:104px;height:1px;background:#8ba5d6;"></div>
<div class="t" style="left:991.20px;top:301.49px;font-size:6.98px;font-weight:normal;font-style:normal;color:#5273b8;letter-spacing:0.368px;">63%</div>
<div class="t" style="left:1028.70px;top:301.49px;font-size:6.98px;font-weight:normal;font-style:normal;color:#5273b8;letter-spacing:0.083px;">12.6k</div>
<div class="t" style="left:1066.20px;top:301.49px;font-size:6.98px;font-weight:normal;font-style:normal;color:#5273b8;transform:scaleX(1.0309);transform-origin:0 0;">0</div>
<div style="position:absolute;left:991px;top:312px;width:104px;height:1px;background:#8ba5d6;"></div>
<div class="t" style="left:991.20px;top:315.49px;font-size:6.98px;font-weight:normal;font-style:normal;color:#5273b8;letter-spacing:0.368px;">42%</div>
<div class="t" style="left:1028.70px;top:315.49px;font-size:6.98px;font-weight:normal;font-style:normal;color:#5273b8;letter-spacing:0.083px;">19.6k</div>
<div class="t" style="left:1066.20px;top:315.49px;font-size:6.98px;font-weight:normal;font-style:normal;color:#5273b8;transform:scaleX(1.0309);transform-origin:0 0;">0</div>
<div style="position:absolute;left:991px;top:326px;width:104px;height:1px;background:#8ba5d6;"></div>
<div class="t" style="left:991.20px;top:329.49px;font-size:6.98px;font-weight:normal;font-style:normal;color:#5273b8;letter-spacing:0.368px;">61%</div>
<div class="t" style="left:1028.70px;top:329.49px;font-size:6.98px;font-weight:normal;font-style:normal;color:#5273b8;letter-spacing:0.071px;">9.5k</div>
<div class="t" style="left:1066.20px;top:329.49px;font-size:6.98px;font-weight:normal;font-style:normal;color:#5273b8;transform:scaleX(1.0309);transform-origin:0 0;">0</div>
<div style="position:absolute;left:991px;top:340px;width:104px;height:1px;background:#8ba5d6;"></div>
<div class="t" style="left:991.20px;top:343.49px;font-size:6.98px;font-weight:normal;font-style:normal;color:#5273b8;letter-spacing:0.368px;">51%</div>
<div class="t" style="left:1028.70px;top:343.49px;font-size:6.98px;font-weight:normal;font-style:normal;color:#5273b8;letter-spacing:0.083px;">13.9k</div>
<div class="t" style="left:1066.20px;top:343.49px;font-size:6.98px;font-weight:normal;font-style:normal;color:#5273b8;transform:scaleX(1.0309);transform-origin:0 0;">0</div>
<div style="position:absolute;left:991px;top:354px;width:104px;height:1px;background:#8ba5d6;"></div>
<div class="t" style="left:991.20px;top:357.49px;font-size:6.98px;font-weight:normal;font-style:normal;color:#5273b8;letter-spacing:0.368px;">92%</div>
<div class="t" style="left:1028.70px;top:357.49px;font-size:6.98px;font-weight:normal;font-style:normal;color:#5273b8;letter-spacing:0.071px;">2.2k</div>
<div class="t" style="left:1066.20px;top:357.49px;font-size:6.98px;font-weight:normal;font-style:normal;color:#5273b8;transform:scaleX(1.0309);transform-origin:0 0;">0</div>
<div class="t" style="left:168.90px;top:414.90px;font-size:7.85px;font-weight:normal;font-style:normal;color:#5073b8;transform:scaleX(0.9507);transform-origin:0 0;">05</div>
<div class="t" style="left:168.90px;top:428.90px;font-size:7.85px;font-weight:normal;font-style:normal;color:#5073b8;transform:scaleX(0.9507);transform-origin:0 0;">04</div>
<div class="t" style="left:168.90px;top:442.90px;font-size:7.85px;font-weight:normal;font-style:normal;color:#5073b8;transform:scaleX(0.9507);transform-origin:0 0;">03</div>
<div class="t" style="left:168.90px;top:456.90px;font-size:7.85px;font-weight:normal;font-style:normal;color:#5073b8;transform:scaleX(0.9507);transform-origin:0 0;">02</div>
<div class="t" style="left:168.90px;top:471.90px;font-size:7.85px;font-weight:normal;font-style:normal;color:#5073b8;transform:scaleX(0.9507);transform-origin:0 0;">01</div>
<svg style="position:absolute;left:0;top:0" width="1123" height="503"><rect x="182" y="410.80" width="410" height="16.5" fill="#fff"/><rect x="182" y="424.88" width="410" height="16.5" fill="#fff"/><rect x="182" y="438.96" width="410" height="16.5" fill="#fff"/><rect x="182" y="453.04" width="410" height="16.5" fill="#fff"/><rect x="182" y="467.12" width="410" height="16.5" fill="#fff"/><rect x="182" y="413.20" width="410" height="11.7" fill="#cbe8e9"/><rect x="182" y="427.28" width="410" height="11.7" fill="#cbe8e9"/><rect x="182" y="441.36" width="410" height="11.7" fill="#cbe8e9"/><rect x="182" y="455.44" width="410" height="11.7" fill="#cbe8e9"/><rect x="182" y="469.52" width="64" height="11.7" fill="#fca30a"/><rect x="246" y="469.52" width="55" height="11.7" fill="#99f599"/><rect x="301" y="469.52" width="53" height="11.7" fill="#b0eced"/><rect x="354" y="469.52" width="107" height="11.7" fill="#fdd9ba"/><rect x="461" y="469.52" width="131" height="11.7" fill="#cbe8e9"/></svg>
<div class="t" style="left:184.30px;top:415.16px;font-size:7.56px;font-weight:normal;font-style:normal;color:#8a8f90;transform:scaleX(0.9806);transform-origin:0 0;">AVAILABLE AREA</div>
<div class="t" style="left:184.30px;top:429.16px;font-size:7.56px;font-weight:normal;font-style:normal;color:#8a8f90;transform:scaleX(0.9806);transform-origin:0 0;">AVAILABLE AREA</div>
<div class="t" style="left:184.30px;top:443.16px;font-size:7.56px;font-weight:normal;font-style:normal;color:#8a8f90;transform:scaleX(0.9806);transform-origin:0 0;">AVAILABLE AREA</div>
<div class="t" style="left:184.30px;top:457.16px;font-size:7.56px;font-weight:normal;font-style:normal;color:#8a8f90;transform:scaleX(0.9806);transform-origin:0 0;">AVAILABLE AREA</div>
<div class="t" style="left:184.60px;top:472.16px;font-size:7.56px;font-weight:bold;font-style:normal;color:#1a1a1a;transform:scaleX(0.9009);transform-origin:0 0;">CORPORATE</div>
<div class="t" style="left:248.60px;top:472.16px;font-size:7.56px;font-weight:bold;font-style:normal;color:#1a1a1a;transform:scaleX(0.9523);transform-origin:0 0;">INSP</div>
<div class="t" style="left:303.60px;top:472.16px;font-size:7.56px;font-weight:bold;font-style:normal;color:#1a1a1a;transform:scaleX(0.9395);transform-origin:0 0;">MANU</div>
<div class="t" style="left:356.60px;top:472.16px;font-size:7.56px;font-weight:bold;font-style:normal;color:#1a1a1a;transform:scaleX(0.9373);transform-origin:0 0;">SERVICES</div>
<div class="t" style="left:463.60px;top:472.16px;font-size:7.56px;font-weight:normal;font-style:normal;color:#8a8f90;transform:scaleX(0.9806);transform-origin:0 0;">AVAILABLE AREA</div>
<div style="position:absolute;left:182px;top:485px;width:800px;height:1px;background:#7f9bd2;"></div>
<div class="t" style="left:180.10px;top:488.61px;font-size:8.72px;font-weight:normal;font-style:normal;color:#6a88c6;transform:scaleX(0.8247);transform-origin:0 0;">0</div>
<div class="t" style="left:254.50px;top:488.61px;font-size:8.72px;font-weight:normal;font-style:normal;color:#6a88c6;transform:scaleX(0.9639);transform-origin:0 0;">5000</div>
<div class="t" style="left:333.10px;top:488.61px;font-size:8.72px;font-weight:normal;font-style:normal;color:#6a88c6;letter-spacing:0.187px;">10000</div>
<div class="t" style="left:414.85px;top:488.61px;font-size:8.72px;font-weight:normal;font-style:normal;color:#6a88c6;letter-spacing:0.187px;">15000</div>
<div class="t" style="left:496.60px;top:488.61px;font-size:8.72px;font-weight:normal;font-style:normal;color:#6a88c6;letter-spacing:0.187px;">20000</div>
<div class="t" style="left:578.35px;top:488.61px;font-size:8.72px;font-weight:normal;font-style:normal;color:#6a88c6;letter-spacing:0.187px;">25000</div>
<div class="t" style="left:660.10px;top:488.61px;font-size:8.72px;font-weight:normal;font-style:normal;color:#6a88c6;letter-spacing:0.187px;">30000</div>
<div class="t" style="left:741.85px;top:488.61px;font-size:8.72px;font-weight:normal;font-style:normal;color:#6a88c6;letter-spacing:0.187px;">35000</div>
<div class="t" style="left:823.60px;top:488.61px;font-size:8.72px;font-weight:normal;font-style:normal;color:#6a88c6;letter-spacing:0.187px;">40000</div>
<div class="t" style="left:905.35px;top:488.61px;font-size:8.72px;font-weight:normal;font-style:normal;color:#6a88c6;letter-spacing:0.187px;">45000</div>
</body></html>
